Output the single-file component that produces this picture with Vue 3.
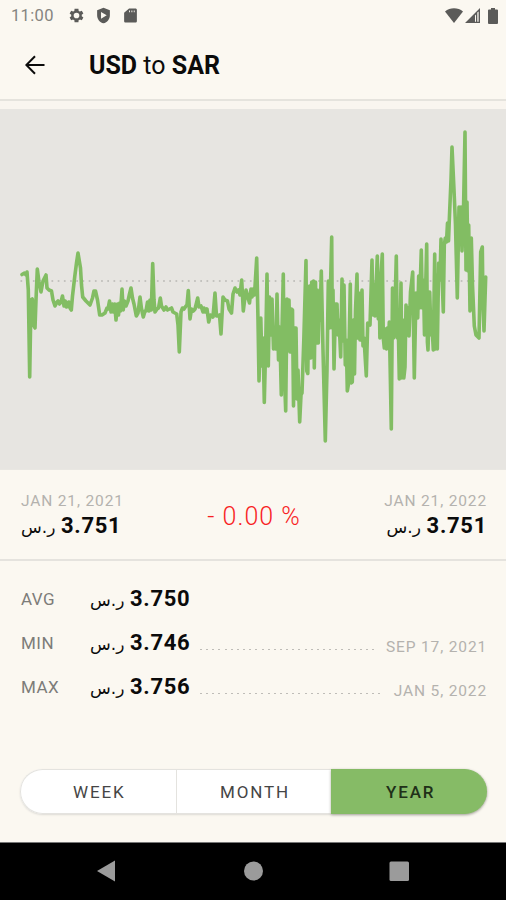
<template>
  <div class="screen">
    <header class="status-bar">
      <span class="clock">11:00</span>
      <svg class="gear" viewBox="0 0 24 24">
        <path
          fill-rule="evenodd"
          d="M19.4 13c.1-.7.1-1.300 0-2l2.300-1.700-2.200-3.900-2.700 1.100c-.5-.4-1.100-.7-1.700-1L14.700 2.600H9.300l-.4 2.900c-.6.3-1.200.6-1.700 1L4.500 5.400 2.300 9.300 4.600 11c-.1.7-.1 1.300 0 2l-2.300 1.700 2.200 3.900 2.700-1.100c.5.4 1.100.7 1.700 1l.4 2.900h5.400l.4-2.900c.6-.3 1.200-.6 1.700-1l2.700 1.100 2.200-3.900zM12 16a4 4 0 1 1 0-8 4 4 0 0 1 0 8z"
        />
      </svg>
      <svg class="shield" viewBox="0 0 24 24">
        <path
          fill-rule="evenodd"
          d="M12 1 3 4.500v7c0 5.500 3.800 10 9 11.500 5.200-1.500 9-6 9-11.500v-7zM8.500 7v9.500L16.500 11.700z"
        />
      </svg>
      <svg class="sd-card" viewBox="0 0 24 24">
        <path
          fill-rule="evenodd"
          d="M19 2h-9L3 8v12c0 1.100.9 2 2 2h14c1.100 0 2-.9 2-2V4c0-1.100-.9-2-2-2zM10 5h1.300v2.500H10zM13.300 5h1.300v2.500h-1.300zM16.600 5h1.300v2.500h-1.300z"
        />
      </svg>
      <div class="status-right">
        <svg class="wifi" viewBox="0 0 18 15">
          <path d="M0 3.500C5-.8 13-.8 18 3.500L9 15z" />
        </svg>
        <svg class="signal" viewBox="0 0 15 15">
          <path d="M0 15 15 0v15zM10 7.500V13.700h1V6.500zM12.300 4.600v9.100h1.300V3.600z" fill-rule="evenodd" />
        </svg>
        <svg class="battery" viewBox="0 0 10 16">
          <path d="M3 0h4v1.500h2q1 0 1 1V15q0 1-1 1H1q-1 0-1-1V2.500q0-1 1-1h2z" />
        </svg>
      </div>
    </header>

    <nav class="toolbar">
      <svg class="back" viewBox="0 0 20 20">
        <path d="M19.500 10H1.500M10 1.300 1.300 10l8.700 8.700" />
      </svg>
      <h1><b>USD</b> to <b>SAR</b></h1>
    </nav>

    <section class="chart">
      <svg viewBox="0 109 506 360">
        <line class="baseline" x1="20.500" y1="281" x2="487" y2="281" />
        <polyline class="rate-line" :points="points" />
      </svg>
    </section>

    <section class="change">
      <div class="endpoint">
        <p class="date">JAN 21, 2021</p>
        <p class="price"><bdi>{{ currency }}</bdi><b>3.751</b></p>
      </div>
      <p class="percent">- 0.00 %</p>
      <div class="endpoint right">
        <p class="date">JAN 21, 2022</p>
        <p class="price"><bdi>{{ currency }}</bdi><b>3.751</b></p>
      </div>
    </section>

    <section class="stats">
      <div v-for="stat in stats" :key="stat.label" class="stat">
        <span class="label">{{ stat.label }}</span>
        <p class="price"><bdi>{{ currency }}</bdi><b>{{ stat.value }}</b></p>
        <template v-if="stat.date">
          <span class="dots"></span>
          <span class="date">{{ stat.date }}</span>
        </template>
      </div>
    </section>

    <div class="ranges">
      <button
        v-for="range in ranges"
        :key="range"
        :class="{ active: range === selected }"
        @click="selected = range"
      >
        {{ range }}
      </button>
    </div>

    <footer class="nav-bar">
      <svg viewBox="0 0 506 58">
        <path d="M97 28 115 17.500V38.500z" />
        <circle cx="253.500" cy="28" r="9.500" />
        <rect x="389.500" y="18.500" width="19.500" height="19.500" rx="1.500" />
      </svg>
    </footer>
  </div>
</template>

<script setup>
import { ref } from "vue";

const currency = "ر.س";

const stats = [
  { label: "AVG", value: "3.750" },
  { label: "MIN", value: "3.746", date: "SEP 17, 2021" },
  { label: "MAX", value: "3.756", date: "JAN 5, 2022" },
];

const ranges = ["WEEK", "MONTH", "YEAR"];
const selected = ref("YEAR");

// Daily rates for the selected year
const points = `
  22,274.5 24.5,273 26,275 27,272 28.3,290 29.7,377 31,300 32.3,299 33.5,325
  35,328 36,300 37.3,269 39,282 41,292 43,281 46,275 47,288 49,290 51.5,291
  53,300 55,306 57,302 58,301 59.5,304 61,302 62.5,296 64,306 65.2,301 66.5,307
  68.7,302 70,308 71.3,310 72.5,296 74.7,277 76.5,263 78,253 80.5,268 81.5,285
  82.7,297 86,301 88,303 90,305 92.5,298 94,291 95.5,291 97.5,300 99.7,315
  102,315 105,313 107,308 108,309 109.5,301 111,312 112.5,304 113.5,312 114.7,304
  116,320 117.5,304 118.5,315 119.7,303 120.5,311 122,289 123.2,310 124.5,301
  126,306 128,301 129.5,294 131,288 132.5,298 134,304 136.3,316 138,313 140,297
  141.5,309 143.3,317 145,311 146,311 147.5,302 149,311 150,300 151.3,310
  152.7,263.5 154,300 155,312 157,309 158.5,308 160.3,298 161.5,306 164,310
  166,307 167.5,310 169.5,309 171.5,308 173,312 176.7,314 178,325 179.3,352
  181,312 182.5,308 184,309 186,306 187,305 188.3,290.5 190,319 191.5,309
  193.3,311 195,309 197.7,298 199,307 201,306 203,312 204,308 205.5,312 207,309
  208.7,322 210.5,315 213,317 215,293 216.5,316 218,316 219.5,315 221,334
  223,297 225,300 227.5,301 229,309 231.5,313 233,294 235,288 237,292 238.5,290
  240,295 241.7,280 243.3,311 244.5,301 246,290 248,298 249.5,303 251,289
  252,297 253,289 254.5,295 256.7,258 258,320 259,381 260.8,318 262,366
  263,338 264.3,402.5 265.7,345 267,274 268.3,366 269.5,297 271,335 272,299
  273.5,349 274.5,328 276,349 277,294 278.5,360 279.7,327 281.3,395 282,330
  283.3,274 284.2,370 285.7,411 287,299 288.3,350 289,300 290,352 291.5,309
  292.5,310 293.5,406 294.7,328 296,328 297,399 298,370 299.7,422 301,395
  302,393 303.8,340 306,260.5 306.8,371 307.8,373.5 308.7,310 309.5,286
  310.8,358 311.7,282 312.7,346 313.5,281 314.3,368 315.5,282 316.3,343
  317.3,290 318.3,343 319.2,295 320,320 321.3,271 323,350 325.3,441 327,370
  328.3,281 329.5,328 331.7,237 332.3,328 333,290 334,369 335.5,304 337,304
  338,335 339,320 340.7,357 342,279 343.3,341 344,285 345.3,365 346.3,340
  347.3,391 348.3,385 350.3,284 351,383 352.3,382 353.5,320 354.5,374 355.5,310
  357,274 358,338 359,293 360,340 362,290 363,346 364,338 366.3,376 367.7,323
  370,325 372,260 373,315 374,284 375,316 376,290 377.3,256 378.3,319 379,280
  379.9,338 381,275 382.3,254 383.3,338 384.3,348 385.3,329 386.5,349 387.3,328
  388.3,348 389.3,322 391.3,429 392.5,288 393.6,338 394.7,320 396.3,256
  397.3,338 398.2,322 399.3,379 401,283 401.8,378 403,320 403.8,378 405,367
  406,305 407,335 408,308 409,336 410.5,292 412.7,272 414.3,378 416,293
  417.7,318 418.7,276 419.5,308 421.3,250 422.4,308 423.4,280 424.5,335
  426.7,244 427.4,342 428,350 429.7,292 431,335 432,325 433.3,350 434.7,254
  435.5,349 436.5,275 437.3,349 438.7,263 440,280 441,239 442,274 443.3,312
  444.3,245 445.3,238 446.5,242 447.5,223 448.5,241 449.5,215 451,180 452,147
  454,190 455.5,225 457.3,298 459,207 460,243 461,207 462,251 463.5,210
  465,132 466,270 467,202 468,271 468.7,225 470,311 471.3,238 472.5,285
  474.3,326 476,335 479,338 480.7,252 482.3,247 483,305 484,331 485.7,277`;
</script>

<style>
body {
  margin: 0;
}
</style>

<style scoped>
.screen {
  width: 506px;
  height: 900px;
  display: flex;
  flex-direction: column;
  background: #fbf8f1;
  color: #0b0b0b;
  font-family: Roboto, "DejaVu Sans", sans-serif;
  overflow: hidden;
}

p,
h1 {
  margin: 0;
}

svg {
  display: block;
}

.status-bar {
  height: 32px;
  display: flex;
  align-items: center;
  box-sizing: border-box;
  padding: 0 8px 1px 11px;
  color: #858480;
  fill: #5b5b59;
}

.clock {
  width: 57px;
  font-size: 16.5px;
  letter-spacing: 0.35px;
  line-height: 32px;
}

.gear,
.shield,
.sd-card {
  width: 17px;
  height: 17px;
  margin-right: 10px;
}

.status-right {
  display: flex;
  align-items: center;
  margin-left: auto;
}

.wifi {
  width: 18px;
  height: 15px;
  margin-right: 2px;
}

.signal {
  width: 15px;
  height: 15px;
  margin-right: 8px;
}

.battery {
  width: 10px;
  height: 16px;
}

.toolbar {
  height: 67px;
  display: flex;
  align-items: center;
  box-sizing: border-box;
  padding: 0 25px;
}

.back {
  width: 20px;
  height: 20px;
  margin-right: 44px;
  margin-bottom: 2px;
  fill: none;
  stroke: #0b0b0b;
  stroke-width: 2;
}

.toolbar h1 {
  font-size: 25px;
  font-weight: 400;
  line-height: 30px;
}

.chart {
  height: 360px;
  border-top: 2px solid #e5e3dd;
  padding-top: 8px;
  background: linear-gradient(#f9f5ef 8px, #e7e5e1 8px);
}

.chart svg {
  width: 506px;
  height: 360px;
}

.baseline {
  stroke: #a09f9c;
  stroke-width: 1.2;
  stroke-dasharray: 1.7 4.5;
}

.rate-line {
  fill: none;
  stroke: #82bd63;
  stroke-width: 3.6;
  stroke-linecap: round;
  stroke-linejoin: round;
}

.change {
  height: 92px;
  display: flex;
  justify-content: space-between;
  box-sizing: border-box;
  padding: 21px 19px 0 21px;
  border-top: 1px solid #e9e7e2;
  border-bottom: 2px solid #e5e3de;
}

.date {
  font-size: 15.5px;
  line-height: 20px;
  letter-spacing: 0.85px;
  color: #b4b2ae;
}

.price {
  display: flex;
  align-items: baseline;
  font-size: 22px;
  line-height: 29px;
  letter-spacing: 0.7px;
}

.price bdi {
  width: 40px;
  font-family: "DejaVu Sans", sans-serif;
  font-size: 17px;
  letter-spacing: 0;
  text-align: left;
}

.right .price {
  justify-content: flex-end;
}

.percent {
  padding-top: 11px;
  font-size: 25px;
  line-height: 30px;
  letter-spacing: 1px;
  font-weight: 300;
  color: #f81e24;
}

.stats {
  padding: 16px 19px 0 21px;
}

.stat {
  height: 44px;
  display: flex;
  align-items: center;
}

.label {
  width: 69px;
  font-size: 17px;
  letter-spacing: 0.5px;
  color: #7d7c79;
}

.dots {
  flex: 1;
  height: 1.5px;
  margin: 13px 10px 0 10px;
  background: repeating-linear-gradient(90deg, #bfbdb8 0 2px, transparent 2px 6.15px);
}

.stat .date {
  padding-top: 8px;
}

.ranges {
  display: flex;
  width: 467px;
  height: 45px;
  box-sizing: border-box;
  margin: 60px 0 0 20px;
  border-radius: 23px;
  background: #fff;
  box-shadow: 0 1px 2px #dddbd6;
}

.ranges button {
  flex: 1;
  border: 1px solid #e4e3df;
  border-right: 0;
  padding: 0 0 0 2px;
  background: #fff;
  color: #454545;
  font: 400 17px Roboto, sans-serif;
  letter-spacing: 1.9px;
  cursor: pointer;
}

.ranges button:first-child {
  border-radius: 23px 0 0 23px;
}

.ranges button:last-child {
  border-radius: 0 23px 23px 0;
}

.ranges button.active {
  border-color: #85ba65;
  background: #86bb66;
  color: #203018;
  font-weight: 500;
  box-shadow: 0 1px 3px #aaa8a0;
}

.nav-bar {
  height: 58px;
  margin-top: auto;
  background: #000;
  border-top: 1px solid #777;
  box-sizing: border-box;
}

.nav-bar svg {
  width: 506px;
  height: 58px;
  fill: #9b9b9b;
}
</style>
